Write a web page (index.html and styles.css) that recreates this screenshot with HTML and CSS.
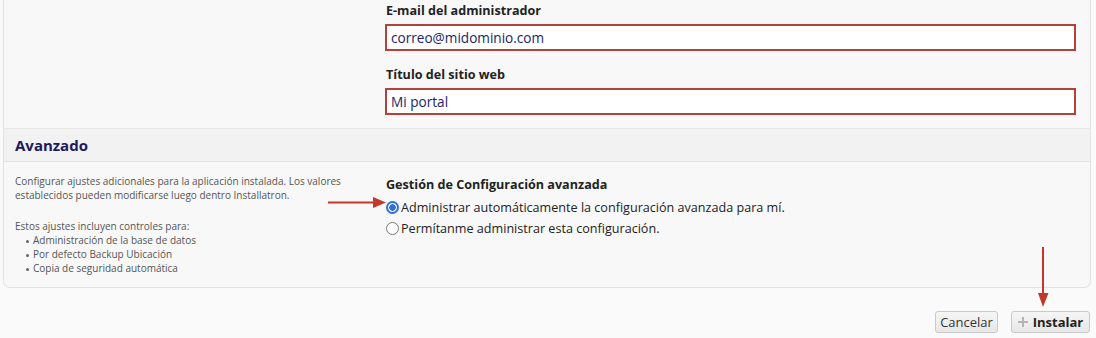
FILE: index.html
```html
<!DOCTYPE html>
<html lang="es">
<head>
<meta charset="utf-8">
<title>Instalar</title>
<link rel="stylesheet" href="styles.css">
</head>
<body>
<div class="card">
  <div class="row top">
    <div class="col-left"></div>
    <div class="col-right">
      <label class="field-label">E-mail del administrador</label>
      <div class="input">correo@midominio.com</div>
      <label class="field-label second">Título del sitio web</label>
      <div class="input">Mi portal</div>
    </div>
  </div>
  <div class="section-head">Avanzado</div>
  <div class="row adv">
    <div class="col-left desc">
      <p>Configurar ajustes adicionales para la aplicación instalada. Los valores establecidos pueden modificarse luego dentro Installatron.</p>
      <p class="p2">Estos ajustes incluyen controles para:</p>
      <ul>
        <li>Administración de la base de datos</li>
        <li>Por defecto Backup Ubicación</li>
        <li>Copia de seguridad automática</li>
      </ul>
    </div>
    <div class="col-right">
      <div class="field-label">Gestión de Configuración avanzada</div>
      <div class="radio-row"><span class="radio checked"></span><span>Administrar automáticamente la configuración avanzada para mí.</span></div>
      <div class="radio-row"><span class="radio"></span><span>Permítanme administrar esta configuración.</span></div>
    </div>
  </div>
</div>
<div class="actions">
  <button class="btn cancel">Cancelar</button>
  <button class="btn primary"><svg class="plus" width="10" height="10" viewBox="0 0 10 10"><path d="M5 0v10M0 5h10" stroke="#b4b4b4" stroke-width="2"/></svg>Instalar</button>
</div>
<svg class="annot" width="1096" height="338" viewBox="0 0 1096 338">
  <path d="M328 202.5H376" stroke="#c0392b" stroke-width="2"/>
  <path d="M373 197L386 202.5L373 208Z" fill="#c0392b"/>
  <path d="M1043 247V296" stroke="#c0392b" stroke-width="2"/>
  <path d="M1038 293L1043 307L1048.5 293Z" fill="#c0392b"/>
</svg>
</body>
</html>
```
FILE: styles.css
```css
* { box-sizing: border-box; }
html, body { margin: 0; padding: 0; }
body {
  background: #fafafa;
  font-family: "Open Sans", "Liberation Sans", sans-serif;
  color: #222;
  width: 1096px;
  height: 338px;
  overflow: hidden;
  position: relative;
}
.card {
  margin-left: 3px;
  width: 1088px;
  background: #f8f8f8;
  border: 1px solid #e2e2e2;
  border-top: none;
  border-radius: 0 0 7px 7px;
}
.row {
  display: grid;
  grid-template-columns: 382px 1fr;
}
.top { padding: 2px 0 13px; }
.field-label {
  display: block;
  font-size: 12.6px;
  font-weight: 700;
  line-height: 18px;
  color: #222;
}
.field-label.second { margin-top: 15px; }
.input {
  margin-top: 4px;
  margin-left: -1px;
  width: 691px;
  height: 27px;
  border: 2px solid #b4423a;
  background: #fff;
  font-size: 13.6px;
  line-height: 23px;
  padding-left: 4px;
  color: #211e6a;
}
.section-head {
  height: 34px;
  background: #f2f2f3;
  border-top: 1px solid #e8e8e8;
  border-bottom: 1px solid #e4e4e4;
  padding-left: 11px;
  font-size: 15px;
  font-weight: 700;
  line-height: 32px;
  color: #1c1a5c;
}
.adv { padding: 13px 0 12px; }
.desc {
  padding-left: 11px;
  font-size: 10px;
  line-height: 13.7px;
  color: #555;
}
.desc p { margin: 0; width: 340px; }
.desc .p2 { margin-top: 18px; }
.desc ul { margin: 0; padding: 0 0 0 11px; list-style: none; }
.desc li { position: relative; padding-left: 7px; }
.desc li::before {
  content: "";
  position: absolute;
  left: 0;
  top: 6px;
  width: 3px;
  height: 3px;
  border-radius: 50%;
  background: #666;
}
.adv .field-label { margin-top: 1px; margin-bottom: 3px; }
.radio-row {
  display: flex;
  align-items: center;
  gap: 2px;
  font-size: 12.6px;
  line-height: 21px;
  color: #222;
}
.radio {
  width: 13px;
  height: 13px;
  border-radius: 50%;
  border: 1px solid #767676;
  background: #fff;
  flex: none;
}
.radio.checked {
  border: 2px solid #2d6ee0;
  background: radial-gradient(circle, #2d6ee0 0 3px, #fff 3.5px);
}
.actions {
  display: flex;
  justify-content: flex-end;
  gap: 13px;
  padding: 23px 6px 0 0;
}
.btn {
  font-family: "Open Sans", "Liberation Sans", sans-serif;
  font-size: 13px;
  color: #333;
  height: 22px;
  padding: 0;
  line-height: 20px;
  border: 1px solid #c9c9c9;
  border-radius: 3px;
  background: linear-gradient(#f6f6f6, #e7e7e7);
  display: flex;
  align-items: center;
  justify-content: center;
  gap: 5px;
}
.btn.cancel { width: 63px; }
.btn.primary { width: 79px; font-weight: 700; color: #222; }
.plus { flex: none; }
.annot { position: absolute; left: 0; top: 0; pointer-events: none; }
```
